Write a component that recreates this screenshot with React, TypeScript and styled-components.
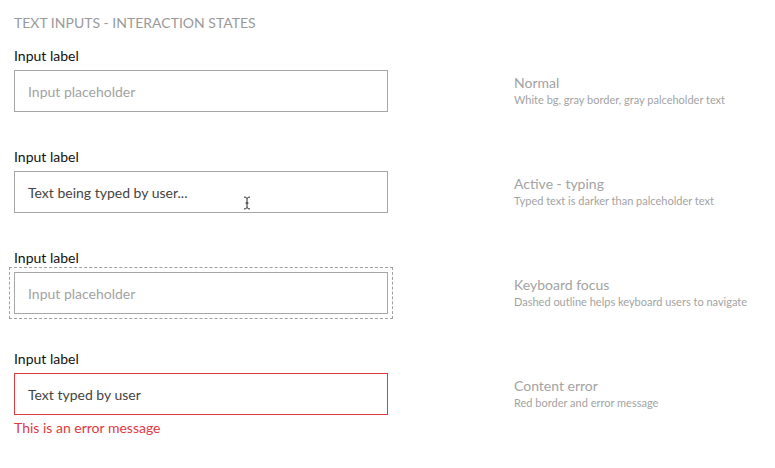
import React from "react";
import styled, { createGlobalStyle } from "styled-components";

const Global = createGlobalStyle`
  html, body { margin: 0; padding: 0; background: #fff; }
  body { font-family: Lato, "Open Sans", sans-serif; -webkit-font-smoothing: antialiased; }
`;

const Page = styled.div`
  width: 775px;
  height: 468px;
  box-sizing: border-box;
  padding: 13px 14px 0 14px;
  display: flex;
  flex-direction: column;
`;

const Title = styled.h1`
  margin: 0 0 13px 0;
  font-size: 14px;
  line-height: 20px;
  font-weight: 400;
  color: #9a9a9a;
`;

const Row = styled.div`
  display: grid;
  grid-template-columns: 374px 1fr;
  grid-template-areas:
    "label ."
    "input note"
    "error .";
  column-gap: 126px;
  margin-bottom: 35px;
`;

const Label = styled.label`
  grid-area: label;
  font-size: 14px;
  line-height: 20px;
  color: #111;
  margin-bottom: 4px;
`;

const Field = styled.div<{ $error?: boolean; $focus?: boolean }>`
  grid-area: input;
  position: relative;
  box-sizing: border-box;
  height: 42px;
  border: 1px solid ${(p) => (p.$error ? "#e03a3e" : "#a6a6a6")};
  display: flex;
  align-items: center;
  padding: 0 13px;
  outline: ${(p) => (p.$focus ? "1px dashed #a0a0a0" : "none")};
  outline-offset: 4px;
`;

const Text = styled.span<{ $typed?: boolean }>`
  font-size: 14px;
  color: ${(p) => (p.$typed ? "#444" : "#a3a3a3")};
`;

const Caret = styled.svg`
  position: absolute;
  left: 228px;
  top: 24px;
`;

const Note = styled.div`
  grid-area: note;
  align-self: center;
  display: flex;
  flex-direction: column;
  padding-bottom: 1px;
`;

const NoteTitle = styled.div`
  font-size: 14px;
  line-height: 18px;
  color: #a3a3a3;
`;

const NoteDesc = styled.div`
  font-size: 11px;
  line-height: 15px;
  color: #a3a3a3;
`;

const ErrorMsg = styled.div`
  grid-area: error;
  font-size: 14px;
  line-height: 20px;
  color: #e03a3e;
  margin-top: 3px;
`;

const IBeam = () => (
  <Caret width="8" height="14" viewBox="0 0 8 14">
    <path
      d="M1 1 Q3 1 4 2.5 Q5 1 7 1 M4 2.5 L4 11.5 M1 13 Q3 13 4 11.5 Q5 13 7 13 M2.5 7 L5.5 7"
      fill="none"
      stroke="#222"
      strokeWidth="1"
    />
  </Caret>
);

export default function App() {
  return (
    <>
      <Global />
      <Page>
        <Title>TEXT INPUTS - INTERACTION STATES</Title>

        <Row>
          <Label>Input label</Label>
          <Field>
            <Text>Input placeholder</Text>
          </Field>
          <Note>
            <NoteTitle>Normal</NoteTitle>
            <NoteDesc>White bg, gray border, gray palceholder text</NoteDesc>
          </Note>
        </Row>

        <Row>
          <Label>Input label</Label>
          <Field>
            <Text $typed>Text being typed by user...</Text>
            <IBeam />
          </Field>
          <Note>
            <NoteTitle>Active - typing</NoteTitle>
            <NoteDesc>Typed text is darker than palceholder text</NoteDesc>
          </Note>
        </Row>

        <Row>
          <Label>Input label</Label>
          <Field $focus>
            <Text>Input placeholder</Text>
          </Field>
          <Note>
            <NoteTitle>Keyboard focus</NoteTitle>
            <NoteDesc>Dashed outline helps keyboard users to navigate</NoteDesc>
          </Note>
        </Row>

        <Row>
          <Label>Input label</Label>
          <Field $error>
            <Text $typed>Text typed by user</Text>
          </Field>
          <Note>
            <NoteTitle>Content error</NoteTitle>
            <NoteDesc>Red border and error message</NoteDesc>
          </Note>
          <ErrorMsg>This is an error message</ErrorMsg>
        </Row>
      </Page>
    </>
  );
}
